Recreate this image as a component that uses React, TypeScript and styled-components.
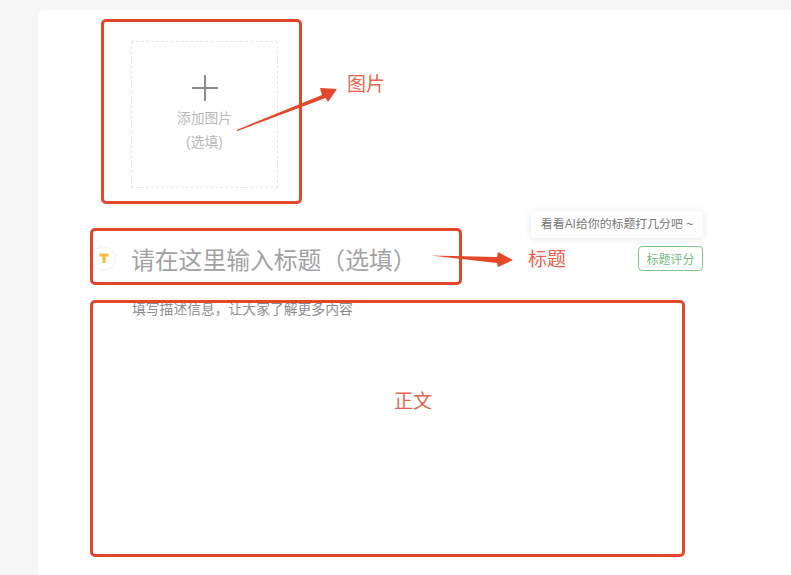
import React from "react";
import styled, { createGlobalStyle } from "styled-components";

const Global = createGlobalStyle`
  html, body { margin: 0; padding: 0; height: 100%; background: #f6f6f6; overflow: hidden; }
  #root { height: 100%; }
  * { box-sizing: border-box; }
  body { font-family: "Liberation Sans", "Noto Sans CJK SC", sans-serif; }
`;

const Page = styled.div`
  position: relative;
  width: 791px;
  height: 575px;
  padding: 10px 0 0 38px;
  overflow: hidden;
`;

const Card = styled.main`
  width: 753px;
  height: 565px;
  background: #fff;
  border-radius: 6px 0 0 0;
  padding: 31px 88px 0 50px;
`;

const Upload = styled.div`
  width: 147px;
  height: 147px;
  margin-left: 43px;
  border: 1px dashed #e6e6e6;
  display: flex;
  flex-direction: column;
  align-items: center;
  padding-top: 32px;
  color: #b8b8b8;
  font-size: 13.8px;
  line-height: 23.5px;
`;

const PlusIcon = styled.svg`
  width: 28px;
  height: 28px;
  margin-bottom: 5px;
  display: block;
`;

const TitleRow = styled.div`
  display: flex;
  align-items: center;
  height: 40px;
  margin-top: 50px;
  position: relative;
`;

const TitleBadge = styled.span`
  width: 25px;
  height: 25px;
  margin-left: 3px;
  border-radius: 50%;
  border: 1px solid #f1f1f1;
  display: flex;
  align-items: center;
  justify-content: center;
  flex: none;
`;

const TitleText = styled.div`
  margin-left: 15px;
  font-size: 23.8px;
  color: #a2a2a2;
  white-space: nowrap;
  flex: 1;
`;

const ScoreButton = styled.button`
  width: 65px;
  height: 25px;
  padding: 0;
  border: 1px solid #7cc68a;
  border-radius: 4px;
  background: #fff;
  color: #74b982;
  font: inherit;
  font-size: 12px;
  flex: none;
`;

const Tooltip = styled.div`
  position: absolute;
  right: 0;
  top: -27px;
  width: 172px;
  height: 27px;
  background: #fff;
  border-radius: 4px;
  box-shadow: 0 1px 8px rgba(0, 0, 0, 0.1);
  color: #777;
  font-size: 11.9px;
  line-height: 27px;
  text-align: center;
  white-space: nowrap;
`;

const Description = styled.div`
  margin: 22px 0 0 44px;
  font-size: 13.8px;
  line-height: 20px;
  color: #8d8d8d;
`;

const AnnotationBox = styled.div<{ $x: number; $y: number; $w: number; $h: number }>`
  position: absolute;
  left: ${(p) => p.$x}px;
  top: ${(p) => p.$y}px;
  width: ${(p) => p.$w}px;
  height: ${(p) => p.$h}px;
  border: 3px solid #e2472b;
  border-radius: 5px;
`;

const AnnotationLabel = styled.span<{ $x: number; $y: number }>`
  position: absolute;
  left: ${(p) => p.$x}px;
  top: ${(p) => p.$y}px;
  font-size: 19px;
  line-height: 24px;
  color: #e5644b;
  white-space: nowrap;
`;

const ArrowLayer = styled.svg`
  position: absolute;
  left: 0;
  top: 0;
  width: 791px;
  height: 575px;
  pointer-events: none;
`;

export default function App() {
  return (
    <>
      <Global />
      <Page>
        <Card>
          <Upload>
            <PlusIcon viewBox="0 0 28 28">
              <path d="M14 1v26M1 14h26" stroke="#8a8a8a" strokeWidth="2" fill="none" />
            </PlusIcon>
            <span>添加图片</span>
            <span>(选填)</span>
          </Upload>
          <TitleRow>
            <Tooltip>看看AI给你的标题打几分吧 ~</Tooltip>
            <TitleBadge>
              <svg width="12" height="12" viewBox="0 0 12 12">
                <path d="M1.500 1.500h9v3H7.600V11H4.400V4.500H1.500z" fill="#f6bd3c" />
              </svg>
            </TitleBadge>
            <TitleText>请在这里输入标题（选填）</TitleText>
            <ScoreButton>标题评分</ScoreButton>
          </TitleRow>
          <Description>填写描述信息，让大家了解更多内容</Description>
        </Card>

        <AnnotationBox $x={101} $y={19} $w={201} $h={185} />
        <AnnotationBox $x={90} $y={228} $w={372} $h={57} />
        <AnnotationBox $x={90} $y={300} $w={595} $h={257} />
        <ArrowLayer viewBox="0 0 791 575">
          <path d="M236.500 130L322 95L320 88L337 89L328 102L325.500 98L237.500 131Z" fill="#e5472a" />
          <path d="M430.500 255.500L497 257L498 252L513 260L498 267L497 263Z" fill="#e5472a" />
        </ArrowLayer>
        <AnnotationLabel $x={347} $y={73}>图片</AnnotationLabel>
        <AnnotationLabel $x={528} $y={248}>标题</AnnotationLabel>
        <AnnotationLabel $x={394} $y={390}>正文</AnnotationLabel>
      </Page>
    </>
  );
}
